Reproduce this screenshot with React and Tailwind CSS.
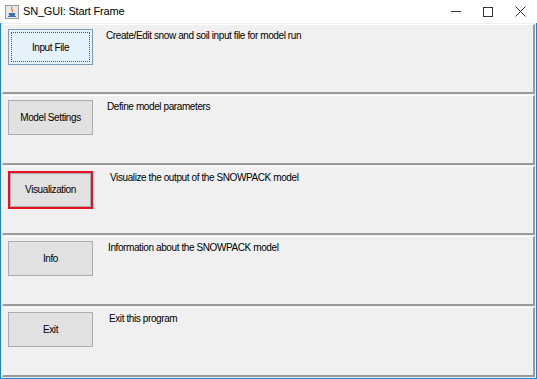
import React from "react";

const rows = [
  { label: "Input File", desc: "Create/Edit snow and soil input file for model run", focus: true, dx: "pl-[13px]" },
  { label: "Model Settings", desc: "Define model parameters", dx: "pl-[14px]" },
  { label: "Visualization", desc: "Visualize the output of the SNOWPACK model", red: true, dx: "pl-[17px]" },
  { label: "Info", desc: "Information about the SNOWPACK model", dx: "pl-[15px]" },
  { label: "Exit", desc: "Exit this program", dx: "pl-[16px]" },
];

function JavaIcon() {
  return (
    <svg width="14" height="14" viewBox="0 0 14 14">
      <rect x="0.5" y="0.5" width="13" height="13" fill="#e8e8e8" stroke="#9a9a9a" />
      <path d="M7 2 C5 4 9 5 7 7" stroke="#e0701a" strokeWidth="1.2" fill="none" />
      <path d="M3.5 8 h7 l-1 3 h-5 z" fill="#3d6eb5" />
      <path d="M3 11.5 h8" stroke="#3d6eb5" strokeWidth="1" />
    </svg>
  );
}

const txt = "text-[10px] tracking-[-0.4px] text-black";

export default function App() {
  return (
    <div
      className="w-[537px] h-[379px] flex flex-col bg-[#1883d7] p-px pt-0"
      style={{ fontFamily: '"Liberation Sans", Arial, sans-serif' }}
    >
      <div className="h-[23px] bg-white flex items-center -mx-px pl-[5px] shrink-0">
        <JavaIcon />
        <span className="ml-[4px] text-[11px] tracking-[-0.2px] text-black">
          SN_GUI: Start Frame
        </span>
        <div className="ml-auto flex items-center h-full">
          <div className="w-[32px] flex justify-center">
            <div className="w-[10px] h-px bg-[#333]" />
          </div>
          <div className="w-[32px] flex justify-center">
            <div className="w-[10px] h-[10px] border border-[#333]" />
          </div>
          <div className="w-[33px] flex justify-center">
            <svg width="11" height="11" viewBox="0 0 11 11">
              <path d="M0.5 0.5 L10.5 10.5 M10.5 0.5 L0.5 10.5" stroke="#333" strokeWidth="1" />
            </svg>
          </div>
        </div>
      </div>
      <div className="flex-1 flex flex-col bg-[#f0f0f0] px-px pb-px">
        {rows.map((r) => (
          <div
            key={r.label}
            className="flex-1 flex border-t border-l border-white border-r-2 border-b-2 border-r-[#9a9a9a] border-b-[#9a9a9a] mt-px bg-[#f0f0f0]"
          >
            <div className="pl-[5px] pt-[4px]">
              {r.red ? (
                <div className="border-2 border-[#e81123] w-[85px] h-[38px] flex items-center justify-center bg-[#e1e1e1]">
                  <div className={`w-full h-full border border-[#adadad] flex items-center justify-center ${txt}`}>
                    {r.label}
                  </div>
                </div>
              ) : r.focus ? (
                <div className="w-[85px] h-[36px] border border-[#7a9ab8] bg-[#e5f1fb] p-[2px]">
                  <div className={`w-full h-full border border-dotted border-[#555] flex items-center justify-center ${txt}`}>
                    {r.label}
                  </div>
                </div>
              ) : (
                <div className={`w-[85px] h-[35px] border border-[#adadad] bg-[#e1e1e1] flex items-center justify-center ${txt}`}>
                  {r.label}
                </div>
              )}
            </div>
            <div className={`${r.dx} pt-[5px] leading-[12px] ${txt}`}>{r.desc}</div>
          </div>
        ))}
      </div>
    </div>
  );
}
